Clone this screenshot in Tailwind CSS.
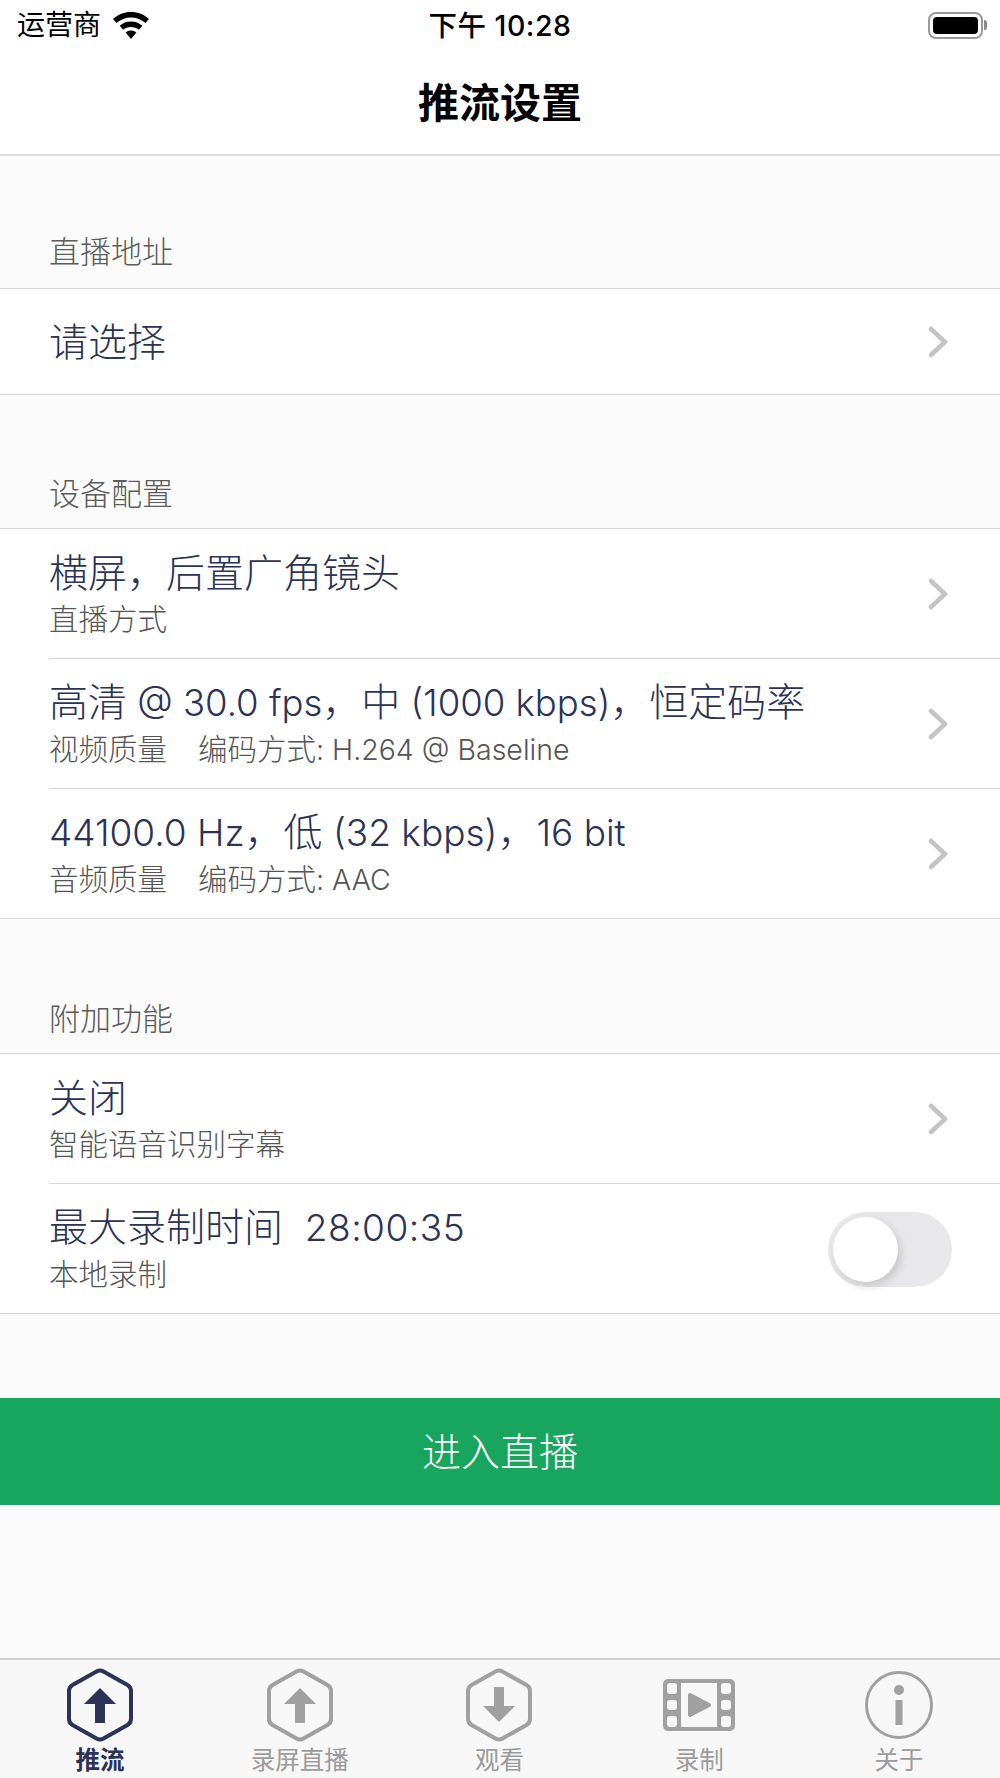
<!DOCTYPE html>
<html lang="zh">
<head>
  <meta charset="UTF-8" />
  <title>推流设置</title>
  <script src="https://cdn.jsdelivr.net/npm/@tailwindcss/browser@4"></script>
</head>
<body class="bg-[#fbfbfb] font-['Inter','Noto_Sans_CJK_SC',sans-serif]">
<div class="w-[1000px] h-[1778px] flex flex-col overflow-hidden">

  <!-- status bar -->
  <div class="h-[50px] bg-white relative flex items-center justify-between pl-[17px] pr-[13px] shrink-0 text-black">
    <div class="flex items-center gap-[12px]">
      <span class="text-[28px] leading-[50px]">运营商</span>
      <svg width="36" height="27" viewBox="0 0 36 27" fill="#000">
        <path d="M18 0C11 0 5 2.500 0 7l3.500 4C7.500 7.500 12.500 5.500 18 5.500S28.500 7.500 32.500 11L36 7C31 2.500 25 0 18 0z"/>
        <path d="M18 9.500c-4.300 0-8.300 1.600-11.300 4.200l3.500 4c2.100-1.800 4.800-2.800 7.800-2.800s5.700 1 7.800 2.800l3.500-4C26.300 11.100 22.300 9.500 18 9.500z"/>
        <path d="M18 18.500c-2.100 0-4 .8-5.400 2L18 27l5.400-6.500c-1.400-1.200-3.300-2-5.400-2z"/>
      </svg>
    </div>
    <span class="absolute left-0 right-0 top-[1px] text-center text-[28.5px] leading-[50px] font-medium tracking-[0.5px]">下午 10:28</span>
    <div class="flex items-center">
      <div class="w-[55px] h-[27px] rounded-[8px] border-[2px] border-[#9a9a9a] p-[3px]">
        <div class="w-full h-full rounded-[4px] bg-black"></div>
      </div>
      <div class="w-[3px] h-[10px] rounded-r-[3px] bg-[#8a8a8a] ml-[1px]"></div>
    </div>
  </div>

  <!-- nav bar -->
  <div class="h-[106px] bg-white border-b-2 border-[#dcdcdc] flex items-center justify-center shrink-0">
    <h1 class="text-[41px] font-bold text-black leading-none pt-[2px]">推流设置</h1>
  </div>

  <!-- 直播地址 -->
  <div class="h-[133px] flex items-end px-[49px] pb-[16px] text-[31px] font-light leading-[40px] text-[#5c5c5c] border-b border-[#d6d6d6] shrink-0">直播地址</div>
  <div class="h-[106px] bg-white border-b border-[#d6d6d6] flex items-center justify-between pl-[49px] pr-[52px] shrink-0">
    <span class="text-[39px] font-light text-[#2b3357] leading-none">请选择</span>
    <svg width="20" height="32" viewBox="0 0 20 32" fill="none" stroke="#c4c4c6" stroke-width="4.500" stroke-linecap="round" stroke-linejoin="round"><path d="M3 3l14 13L3 29"/></svg>
  </div>

  <!-- 设备配置 -->
  <div class="h-[134px] flex items-end px-[49px] pb-[14px] text-[31px] font-light leading-[40px] text-[#5c5c5c] border-b border-[#d6d6d6] shrink-0">设备配置</div>
  <div class="bg-white shrink-0">
    <div class="pl-[49px]">
      <div class="h-[130px] border-b border-[#d6d6d6] flex items-center justify-between pr-[52px]">
        <div>
          <div class="text-[39px] font-light leading-[46px] text-[#2b3357]">横屏，后置广角镜头</div>
          <div class="text-[29.500px] font-light leading-[38px] mt-[4px] text-[#555]">直播方式</div>
        </div>
        <svg width="20" height="32" viewBox="0 0 20 32" fill="none" stroke="#c4c4c6" stroke-width="4.500" stroke-linecap="round" stroke-linejoin="round"><path d="M3 3l14 13L3 29"/></svg>
      </div>
      <div class="h-[130px] border-b border-[#d6d6d6] flex items-center justify-between pr-[52px]">
        <div>
          <div class="text-[39px] font-light leading-[46px] text-[#2b3357]">高清<span class="text-[36.500px]"> @ 30.0 fps</span>，中<span class="text-[36.500px]"> (1000 kbps)</span>，恒定码率</div>
          <div class="text-[29.500px] font-light leading-[38px] mt-[4px] text-[#555]">视频质量<span class="ml-[31px]">编码方式<span class="text-[28.500px]">: H.264 @ Baseline</span></span></div>
        </div>
        <svg width="20" height="32" viewBox="0 0 20 32" fill="none" stroke="#c4c4c6" stroke-width="4.500" stroke-linecap="round" stroke-linejoin="round"><path d="M3 3l14 13L3 29"/></svg>
      </div>
    </div>
    <div class="h-[130px] border-b border-[#d6d6d6] flex items-center justify-between pl-[49px] pr-[52px]">
      <div>
        <div class="text-[39px] font-light leading-[46px] text-[#2b3357]"><span class="text-[37px]">44100.0 Hz</span>，低<span class="text-[37px]"> (32 kbps)</span>，<span class="text-[37px]">16 bit</span></div>
        <div class="text-[29.500px] font-light leading-[38px] mt-[4px] text-[#555]">音频质量<span class="ml-[31px]">编码方式<span class="text-[28.500px]">: AAC</span></span></div>
      </div>
      <svg width="20" height="32" viewBox="0 0 20 32" fill="none" stroke="#c4c4c6" stroke-width="4.500" stroke-linecap="round" stroke-linejoin="round"><path d="M3 3l14 13L3 29"/></svg>
    </div>
  </div>

  <!-- 附加功能 -->
  <div class="h-[135px] flex items-end px-[49px] pb-[14px] text-[31px] font-light leading-[40px] text-[#5c5c5c] border-b border-[#d6d6d6] shrink-0">附加功能</div>
  <div class="bg-white shrink-0">
    <div class="pl-[49px]">
      <div class="h-[130px] border-b border-[#d6d6d6] flex items-center justify-between pr-[52px]">
        <div>
          <div class="text-[39px] font-light leading-[46px] text-[#2b3357]">关闭</div>
          <div class="text-[29.500px] font-light leading-[38px] mt-[4px] text-[#555]">智能语音识别字幕</div>
        </div>
        <svg width="20" height="32" viewBox="0 0 20 32" fill="none" stroke="#c4c4c6" stroke-width="4.500" stroke-linecap="round" stroke-linejoin="round"><path d="M3 3l14 13L3 29"/></svg>
      </div>
    </div>
    <div class="h-[130px] border-b border-[#d6d6d6] flex items-center justify-between pl-[49px] pr-[48px]">
      <div>
        <div class="text-[39px] font-light leading-[46px] text-[#2b3357]">最大录制时间<span class="text-[37px] tracking-[0.5px]">&nbsp;&nbsp;28:00:35</span></div>
        <div class="text-[29.500px] font-light leading-[38px] mt-[4px] text-[#555]">本地录制</div>
      </div>
      <div class="w-[124px] h-[75px] mt-[1px] rounded-full bg-[#e8e8ea] p-[5px]">
        <div class="w-[65px] h-[65px] rounded-full bg-white shadow-[3px_4px_10px_rgba(0,0,0,0.15)]"></div>
      </div>
    </div>
  </div>

  <!-- 进入直播 -->
  <div class="mt-[84px] h-[107px] bg-[#18a55d] flex items-center justify-center pt-[2px] text-white font-light text-[39px] shrink-0">进入直播</div>

  <div class="flex-1"></div>

  <!-- tab bar -->
  <div class="h-[120px] bg-[#f7f7f7] border-t-2 border-[#cfcfcf] grid grid-cols-5 pr-[1px] shrink-0">
    <div class="flex flex-col items-center pt-[8px] text-[#2b3357]">
      <svg width="68" height="74" viewBox="0 0 68 74" fill="none">
        <path d="M30.500 3.500a7 7 0 0 1 7 0l24 13.500a7 7 0 0 1 3.500 6v28a7 7 0 0 1-3.500 6l-24 13.500a7 7 0 0 1-7 0l-24-13.500a7 7 0 0 1-3.500-6V23a7 7 0 0 1 3.500-6z" stroke="#2b3357" stroke-width="4"/>
        <path d="M34 20L50 36H39V55H29V36H18z" fill="#2b3357"/>
      </svg>
      <span class="text-[24.500px] font-bold leading-[30px] mt-[3px]">推流</span>
    </div>
    <div class="flex flex-col items-center pt-[8px] text-[#9b9b9b]">
      <svg width="68" height="74" viewBox="0 0 68 74" fill="none">
        <path d="M30.500 3.500a7 7 0 0 1 7 0l24 13.500a7 7 0 0 1 3.500 6v28a7 7 0 0 1-3.500 6l-24 13.500a7 7 0 0 1-7 0l-24-13.500a7 7 0 0 1-3.500-6V23a7 7 0 0 1 3.500-6z" stroke="#a0a0a0" stroke-width="4"/>
        <path d="M34 20L50 36H39V55H29V36H18z" fill="#a0a0a0"/>
      </svg>
      <span class="text-[24.500px] leading-[30px] mt-[3px]">录屏直播</span>
    </div>
    <div class="flex flex-col items-center pt-[8px] text-[#9b9b9b]">
      <svg width="68" height="74" viewBox="0 0 68 74" fill="none">
        <path d="M30.500 3.500a7 7 0 0 1 7 0l24 13.500a7 7 0 0 1 3.500 6v28a7 7 0 0 1-3.500 6l-24 13.500a7 7 0 0 1-7 0l-24-13.500a7 7 0 0 1-3.500-6V23a7 7 0 0 1 3.500-6z" stroke="#a0a0a0" stroke-width="4"/>
        <path d="M34 54L50 38H39V19H29V38H18z" fill="#a0a0a0"/>
      </svg>
      <span class="text-[24.500px] leading-[30px] mt-[3px]">观看</span>
    </div>
    <div class="flex flex-col items-center pt-[8px] text-[#9b9b9b]">
      <svg width="72" height="74" viewBox="0 1 72 74">
        <path fill-rule="evenodd" fill="#a0a0a0" d="M5 12h62a5 5 0 0 1 5 5v42a5 5 0 0 1-5 5H5a5 5 0 0 1-5-5V17a5 5 0 0 1 5-5zM18 16v44h36V16zM7 16a3 3 0 0 0-3 3v5a3 3 0 0 0 3 3h4a3 3 0 0 0 3-3v-5a3 3 0 0 0-3-3zM7 33a3 3 0 0 0-3 3v4a3 3 0 0 0 3 3h4a3 3 0 0 0 3-3v-4a3 3 0 0 0-3-3zM7 49a3 3 0 0 0-3 3v5a3 3 0 0 0 3 3h4a3 3 0 0 0 3-3v-5a3 3 0 0 0-3-3zM61 16a3 3 0 0 0-3 3v5a3 3 0 0 0 3 3h4a3 3 0 0 0 3-3v-5a3 3 0 0 0-3-3zM61 33a3 3 0 0 0-3 3v4a3 3 0 0 0 3 3h4a3 3 0 0 0 3-3v-4a3 3 0 0 0-3-3zM61 49a3 3 0 0 0-3 3v5a3 3 0 0 0 3 3h4a3 3 0 0 0 3-3v-5a3 3 0 0 0-3-3z"/>
        <path d="M25 28a2 2 0 0 1 3-1.700l19 10a2 2 0 0 1 0 3.400l-19 10A2 2 0 0 1 25 48z" fill="#a0a0a0"/>
      </svg>
      <span class="text-[24.500px] leading-[30px] mt-[3px]">录制</span>
    </div>
    <div class="flex flex-col items-center pt-[8px] text-[#9b9b9b]">
      <svg width="68" height="74" viewBox="0 0 68 74" fill="none">
        <circle cx="34" cy="37" r="32.500" stroke="#a0a0a0" stroke-width="3"/>
        <circle cx="34" cy="22" r="5" fill="#a0a0a0"/>
        <rect x="30.500" y="32" width="7" height="25" fill="#a0a0a0"/>
      </svg>
      <span class="text-[24.500px] leading-[30px] mt-[3px]">关于</span>
    </div>
  </div>
</div>
</body>
</html>
